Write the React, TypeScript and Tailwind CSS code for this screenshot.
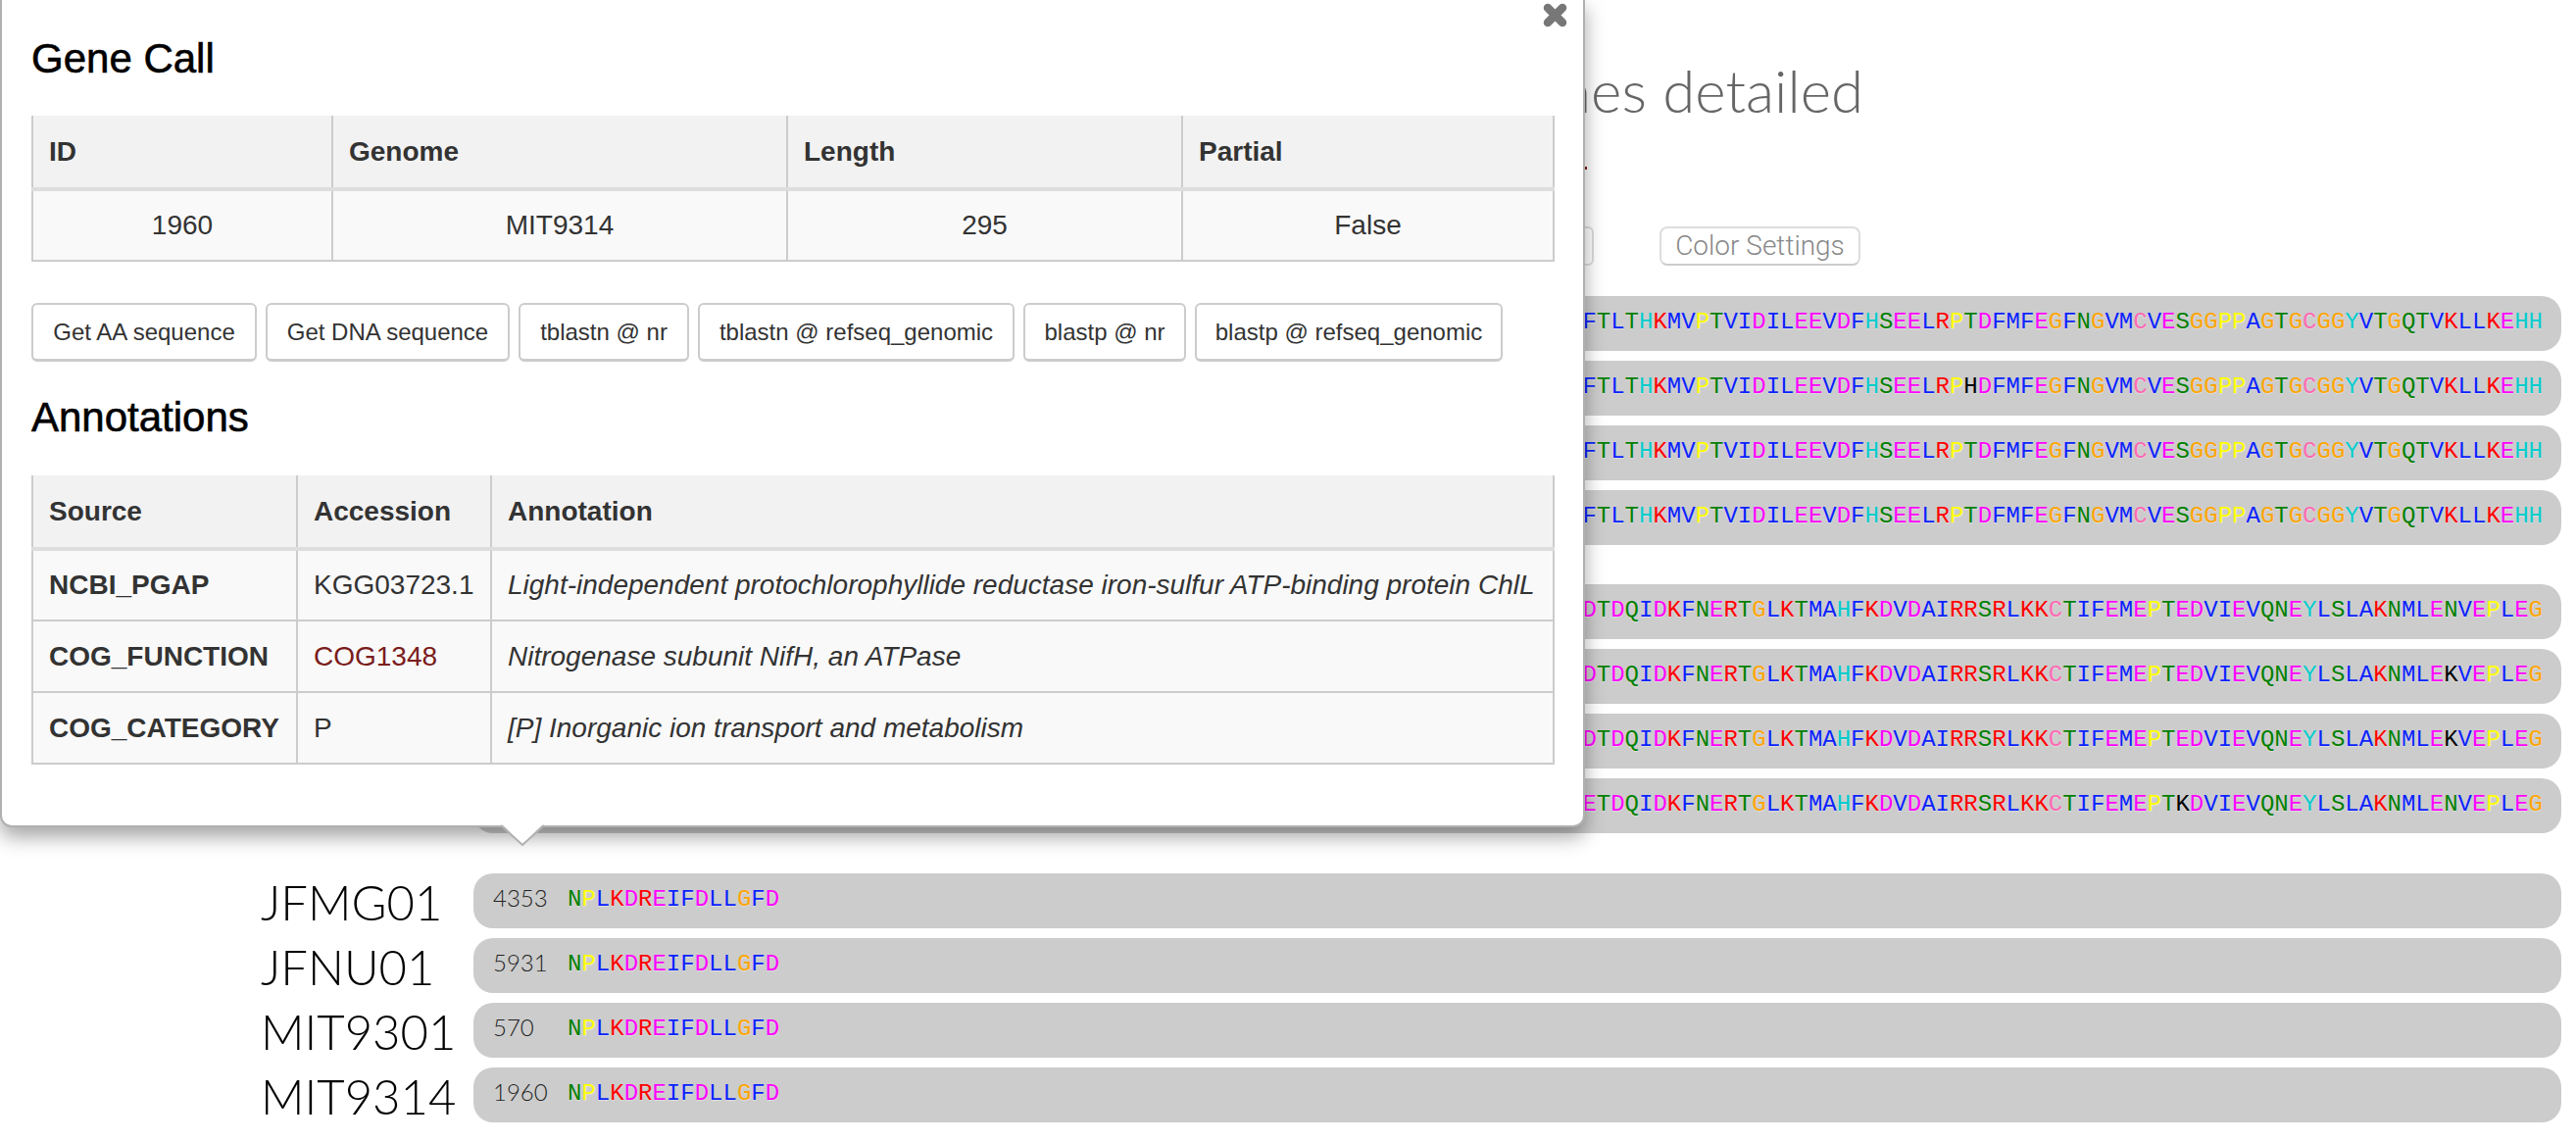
const LATO = "font-['Lato',sans-serif] font-light";
const HELV = "font-['Liberation_Sans',Arial,sans-serif]";

const residueColors: Record<string, string> = {
    G: 'text-[#ffa500]',
    P: 'text-[#ffff00]',
    T: 'text-[#008000]',
    S: 'text-[#008000]',
    N: 'text-[#008000]',
    Q: 'text-[#008000]',
    D: 'text-[#ff00ff]',
    E: 'text-[#ff00ff]',
    K: 'text-[#ff0000]',
    R: 'text-[#ff0000]',
    H: 'text-[#00cccc]',
    Y: 'text-[#00cccc]',
    C: 'text-[#ff69b4]',
};

const Sequence = ({ text, black = -1 }: { text: string; black?: number }) => (
    <span className="font-['Liberation_Mono',monospace] text-[24px] leading-none whitespace-pre pb-[3px] [text-shadow:0_1px_1px_rgba(255,255,255,0.35)]">
        {text.split('').map((c, i) => (
            <span key={i} className={i === black ? 'text-black' : residueColors[c] || 'text-[#0a22ff]'}>
                {c}
            </span>
        ))}
    </span>
);

const CellBorder = 'border-[#cccccc] border-l-2 border-r-2 border-b-2';

const Th = ({ children, w }: { children: string; w: string }) => (
    <th className={`${w} ${CellBorder} border-b-4 border-b-[#dddddd] bg-[#f2f2f2] text-left px-[16px] h-[75px] font-bold text-[#333333]`}>
        {children}
    </th>
);

const genomeBars = [
    { name: 'JFMG01', id: '4353' },
    { name: 'JFNU01', id: '5931' },
    { name: 'MIT9301', id: '570' },
    { name: 'MIT9314', id: '1960' },
];

const firstBlock = 'FTLTHKMVPTVIDILEEVDFHSEELRPTDFMFEGFNGVMCVESGGPPAGTGCGGYVTGQTVKLLKEHH';
const firstRows = [
    { text: firstBlock },
    { text: firstBlock.slice(0, 27) + 'H' + firstBlock.slice(28), black: 27 },
    { text: firstBlock },
    { text: firstBlock },
];

const secondBlock = 'DTDQIDKFNERTGLKTMAHFKDVDAIRRSRLKKCTIFEMEPTEDVIEVQNEYLSLAKNMLENVEPLEG';
const secondKv = secondBlock.slice(0, 61) + 'K' + secondBlock.slice(62);
const secondRows = [
    { text: secondBlock },
    { text: secondKv, black: 61 },
    { text: secondKv, black: 61 },
    { text: 'E' + secondBlock.slice(1, 42) + 'K' + secondBlock.slice(43), black: 42 },
];

const SeqBar = ({ text, black }: { text: string; black?: number }) => (
    <div className="ml-[217px] mb-[10px] h-[56px] rounded-[20px] bg-[#cccccc] flex items-center justify-end pr-[19px]">
        <Sequence text={text} black={black} />
    </div>
);

const buttons = [
    { label: 'Get AA sequence', w: 'w-[230px]' },
    { label: 'Get DNA sequence', w: 'w-[249px]' },
    { label: 'tblastn @ nr', w: 'w-[174px]' },
    { label: 'tblastn @ refseq_genomic', w: 'w-[323px]' },
    { label: 'blastp @ nr', w: 'w-[166px]' },
    { label: 'blastp @ refseq_genomic', w: 'w-[314px]' },
];

const annotations = [
    { source: 'NCBI_PGAP', accession: 'KGG03723.1', text: 'Light-independent protochlorophyllide reductase iron-sulfur ATP-binding protein ChlL' },
    { source: 'COG_FUNCTION', accession: 'COG1348', text: 'Nitrogenase subunit NifH, an ATPase', link: true },
    { source: 'COG_CATEGORY', accession: 'P', text: '[P] Inorganic ion transport and metabolism' },
];

const Popover = () => (
    <div className={`${HELV} absolute left-0 top-[-2px] w-[1617px] h-[846px] bg-white border-2 border-[#b0b0b0] rounded-b-[12px] shadow-[0_10px_20px_rgba(0,0,0,0.35)] px-[30px] z-10`}>
        <svg className="absolute right-[16px] top-[3px]" width="25" height="25" viewBox="0 0 25 25">
            <path d="M5 5 L20 20 M20 5 L5 20" stroke="#777777" strokeWidth="8.5" strokeLinecap="round" />
        </svg>
        <h3 className="text-[42px] leading-[50px] font-medium text-black mt-[35px] [-webkit-text-stroke:0.6px_black]">Gene Call</h3>
        <table className="w-[1552px] mt-[33px] text-[28px] text-[#333333] border-collapse table-fixed">
            <thead>
                <tr>
                    <Th w="w-[306px]">ID</Th>
                    <Th w="w-[464px]">Genome</Th>
                    <Th w="w-[403px]">Length</Th>
                    <Th w="w-[379px]">Partial</Th>
                </tr>
            </thead>
            <tbody>
                <tr className="bg-[#f9f9f9] text-center h-[73px]">
                    <td className={CellBorder}>1960</td>
                    <td className={CellBorder}>MIT9314</td>
                    <td className={CellBorder}>295</td>
                    <td className={CellBorder}>False</td>
                </tr>
            </tbody>
        </table>
        <div className="flex gap-[9px] mt-[42px]">
            {buttons.map((b) => (
                <button key={b.label} className={`${b.w} h-[60px] rounded-[6px] border-2 border-b-[3px] border-[#cccccc] bg-white text-[24px] text-[#333333] whitespace-nowrap`}>
                    {b.label}
                </button>
            ))}
        </div>
        <h3 className="text-[42px] leading-[50px] font-medium text-black mt-[32px] [-webkit-text-stroke:0.6px_black]">Annotations</h3>
        <table className="w-[1552px] mt-[34px] text-[28px] text-[#333333] border-collapse table-fixed">
            <thead>
                <tr>
                    <Th w="w-[270px]">Source</Th>
                    <Th w="w-[198px]">Accession</Th>
                    <Th w="w-[1084px]">Annotation</Th>
                </tr>
            </thead>
            <tbody>
                {annotations.map((row) => (
                    <tr key={row.source} className="bg-[#f9f9f9] h-[73px]">
                        <td className={`${CellBorder} px-[16px] font-bold`}>{row.source}</td>
                        <td className={`${CellBorder} px-[16px] ${row.link ? 'text-[#7b1c1c]' : ''}`}>{row.accession}</td>
                        <td className={`${CellBorder} px-[16px] italic whitespace-nowrap`}>{row.text}</td>
                    </tr>
                ))}
            </tbody>
        </table>
        {/* arrow below the popover */}
        <svg className="absolute left-[508px] top-[842px] overflow-visible" width="46" height="22" viewBox="0 0 46 22">
            <path d="M1 -2 L23 20 L45 -2 Z" fill="#ffffff" />
            <path d="M1 0 L23 20 L45 0" fill="none" stroke="#b0b0b0" strokeWidth="2" />
        </svg>
    </div>
);

export default function App() {
    return (
        <div className="relative w-[2628px] h-[1164px] overflow-hidden bg-white">
            <Popover />
            <div className="pl-[266px] pr-[15px]">
                <div className="h-[302px]">
                    <div className={`${LATO} flex justify-end w-[1635px] pt-[56px] text-[60px] leading-[72px] text-[#666666]`}>
                        genes detailed
                    </div>
                    <div className="w-[3px] h-[3px] mt-[42px] ml-[1350px] bg-[#7b1c1c]" />
                    <div className="flex justify-end items-center gap-[67px] w-[1632px] mt-[58px]">
                        <button className="h-[40px] w-[100px] rounded-[6px] border-2 border-[#dddddd] bg-white" />
                        <button className="font-['Roboto',sans-serif] font-light h-[40px] w-[205px] rounded-[8px] border-2 border-[#dddddd] border-b-[#cccccc] bg-white text-[28px] leading-none text-[#888888] whitespace-nowrap">
                            Color Settings
                        </button>
                    </div>
                </div>
                {firstRows.map((r, i) => (
                    <SeqBar key={i} text={r.text} black={r.black} />
                ))}
                <div className="h-[30px]" />
                {secondRows.map((r, i) => (
                    <SeqBar key={i} text={r.text} black={r.black} />
                ))}
                <div className="h-[31px]" />
                {genomeBars.map((g) => (
                    <div key={g.name} className="flex items-center mb-[10px] h-[56px]">
                        <div className={`${LATO} w-[217px] text-[49px] leading-none text-black pt-[2px]`}>{g.name}</div>
                        <div className="flex-1 h-full rounded-[20px] bg-[#cccccc] flex items-center pl-[20px]">
                            <span className={`${LATO} w-[76px] text-[24px] leading-none text-[#222222] pb-[6px]`}>{g.id}</span>
                            <Sequence text="NPLKDREIFDLLGFD" />
                        </div>
                    </div>
                ))}
            </div>
        </div>
    );
}
